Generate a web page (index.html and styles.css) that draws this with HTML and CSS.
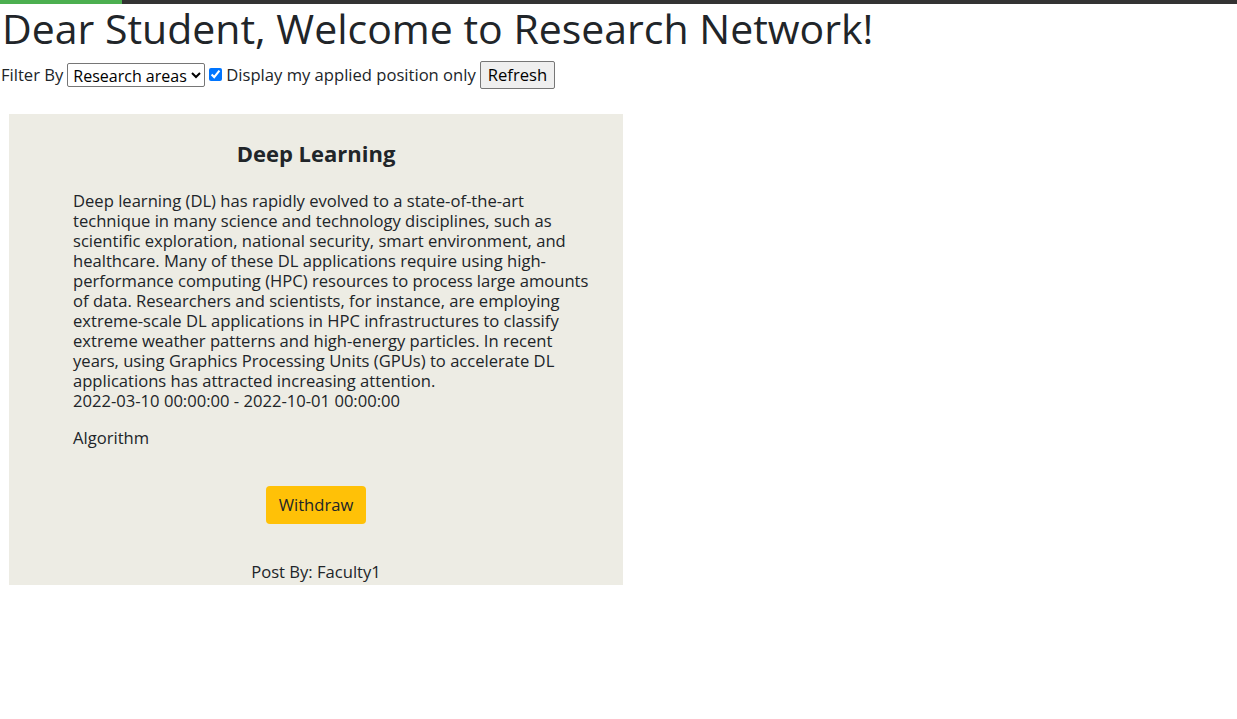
FILE: index.html
```html
<!DOCTYPE html>
<html>
<head>
<meta charset="utf-8">
<link rel="stylesheet" href="styles.css">
</head>
<body>
<div class="progress"><div class="progress-fill"></div></div>
<h1 class="title">Dear Student, Welcome to Research Network!</h1>
<div class="filters">
  <span>Filter By</span>
  <select class="select"><option>Research areas</option></select>
  <label class="check"><input type="checkbox" checked> Display my applied position only</label>
  <button class="refresh">Refresh</button>
</div>
<div class="card">
  <h3 class="card-title">Deep Learning</h3>
  <div class="card-body">
    <p class="desc">Deep learning (DL) has rapidly evolved to a state-of-the-art technique in many science and technology disciplines, such as scientific exploration, national security, smart environment, and healthcare. Many of these DL applications require using high-performance computing (HPC) resources to process large amounts of data. Researchers and scientists, for instance, are employing extreme-scale DL applications in HPC infrastructures to classify extreme weather patterns and high-energy particles. In recent years, using Graphics Processing Units (GPUs) to accelerate DL applications has attracted increasing attention.<br>2022-03-10 00:00:00 - 2022-10-01 00:00:00</p>
    <p class="area">Algorithm</p>
  </div>
  <div class="actions"><button class="withdraw">Withdraw</button></div>
  <div class="poster">Post By: Faculty1</div>
</div>
</body>
</html>
```
FILE: styles.css
```css
body {
  margin: 0;
  font-family: "Open Sans", "Noto Sans", sans-serif;
  color: #212529;
  font-size: 16.6px;
}
.progress {
  height: 4px;
  background: #333;
}
.progress-fill {
  width: 122px;
  height: 4px;
  background: #4caf50;
}
.title {
  margin: 0 0 0 2px;
  font-size: 41px;
  font-weight: 400;
  line-height: 48px;
}
.filters {
  display: flex;
  align-items: center;
  gap: 4px;
  height: 45px;
  padding-left: 1px;
}
.select {
  font-family: inherit;
  font-size: 16px;
  height: 24px;
  padding: 0 1px;
  border: 1px solid #767676;
  border-radius: 2px;
  background: #fff;
  color: #000;
}
.check {
  display: flex;
  align-items: center;
  gap: 4px;
}
.check input {
  margin: 0;
  width: 13px;
  height: 13px;
}
.refresh {
  font-family: inherit;
  font-size: 16.6px;
  height: 28px;
  padding: 0 7px;
  border: 1px solid #767676;
  border-radius: 2px;
  background: #efefef;
  color: #000;
}
.card {
  margin: 17px 0 0 9px;
  width: 614px;
  background: #edece4;
  padding: 23px 0 3px;
  box-sizing: border-box;
}
.card-title {
  margin: 0;
  text-align: center;
  font-size: 22px;
  line-height: 32px;
  font-weight: 700;
}
.card-body {
  padding: 0 34px 0 64px;
}
.desc {
  margin: 22px 0 0;
  line-height: 20px;
}
.area {
  margin: 17px 0 0;
  line-height: 20px;
}
.actions {
  display: flex;
  justify-content: center;
  margin-top: 38px;
}
.withdraw {
  font-family: inherit;
  font-size: 16.6px;
  width: 100px;
  height: 38px;
  padding: 0 0 1px;
  background: #ffc107;
  border: none;
  border-radius: 4px;
  color: #212529;
}
.poster {
  margin-top: 38px;
  text-align: center;
  line-height: 20px;
}
```
